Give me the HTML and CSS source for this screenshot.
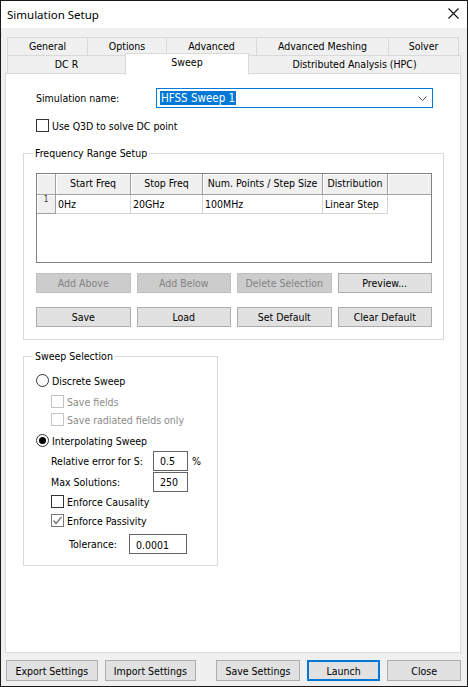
FILE: index.html
```html
<!DOCTYPE html>
<html lang="en">
<head>
<meta charset="UTF-8" />
<title>Simulation Setup</title>
<link rel="stylesheet" href="styles.css">
</head>
<body>
<div class="window">
  <div class="titlebar">
    <span class="title">Simulation Setup</span>
    <svg class="close" width="11" height="11" viewBox="0 0 11 11"><path d="M0.5 0.5 L10.5 10.5 M10.5 0.5 L0.5 10.5" stroke="#111" stroke-width="1.1" fill="none"/></svg>
  </div>

  <div class="client">
    <div class="tabs">
      <div class="tab-row">
        <div class="tab w-general">General</div>
        <div class="tab w-options">Options</div>
        <div class="tab w-advanced">Advanced</div>
        <div class="tab w-meshing">Advanced Meshing</div>
        <div class="tab w-solver">Solver</div>
      </div>
      <div class="tab-row second">
        <div class="tab w-dcr">DC R</div>
        <div class="tab w-sweep active">Sweep</div>
        <div class="tab w-hpc">Distributed Analysis (HPC)</div>
      </div>
    </div>

    <div class="panel">
      <div class="name-row">
        <label class="name-label">Simulation name:</label>
        <div class="combo">
          <span class="combo-text">HFSS Sweep 1</span>
          <svg class="chevron" width="9" height="5" viewBox="0 0 9 5"><path d="M0.5 0.5 L4.5 4.5 L8.5 0.5" stroke="#555" fill="none"/></svg>
        </div>
      </div>

      <div class="check-row q3d">
        <span class="checkbox"></span>
        <span>Use Q3D to solve DC point</span>
      </div>

      <fieldset class="group freq">
        <legend>Frequency Range Setup</legend>
        <div class="grid">
          <div class="grid-row head">
            <div class="cell corner"></div>
            <div class="cell c-start">Start Freq</div>
            <div class="cell c-stop">Stop Freq</div>
            <div class="cell c-num">Num. Points / Step Size</div>
            <div class="cell c-dist">Distribution</div>
            <div class="cell c-rest"></div>
          </div>
          <div class="grid-row data">
            <div class="cell corner">1</div>
            <div class="cell c-start">0Hz</div>
            <div class="cell c-stop">20GHz</div>
            <div class="cell c-num">100MHz</div>
            <div class="cell c-dist">Linear Step</div>
          </div>
        </div>
        <div class="btn-grid first">
          <button class="btn" disabled>Add Above</button>
          <button class="btn" disabled>Add Below</button>
          <button class="btn" disabled>Delete Selection</button>
          <button class="btn">Preview...</button>
        </div>
        <div class="btn-grid second">
          <button class="btn">Save</button>
          <button class="btn">Load</button>
          <button class="btn">Set Default</button>
          <button class="btn">Clear Default</button>
        </div>
      </fieldset>

      <fieldset class="group sweep">
        <legend>Sweep Selection</legend>
        <div class="check-row r-discrete">
          <span class="radio"></span>
          <span>Discrete Sweep</span>
        </div>
        <div class="check-row sub disabled r-fields">
          <span class="checkbox"></span>
          <span>Save fields</span>
        </div>
        <div class="check-row sub disabled r-radiated">
          <span class="checkbox"></span>
          <span>Save radiated fields only</span>
        </div>
        <div class="check-row r-interp">
          <span class="radio on"></span>
          <span>Interpolating Sweep</span>
        </div>
        <div class="field-row r-rel">
          <span class="field-label">Relative error for S:</span>
          <span class="input small">0.5</span>
          <span class="unit">%</span>
        </div>
        <div class="field-row r-max">
          <span class="field-label">Max Solutions:</span>
          <span class="input small">250</span>
        </div>
        <div class="check-row sub r-caus">
          <span class="checkbox"></span>
          <span>Enforce Causality</span>
        </div>
        <div class="check-row sub r-pass">
          <span class="checkbox checked">
            <svg width="11" height="11" viewBox="0 0 11 11"><path d="M1.5 5.5 L4 8.5 L9.5 2" stroke="#6d6d6d" stroke-width="1.2" fill="none"/></svg>
          </span>
          <span>Enforce Passivity</span>
        </div>
        <div class="field-row r-tol">
          <span class="field-label tol">Tolerance:</span>
          <span class="input wide">0.0001</span>
        </div>
      </fieldset>
    </div>

    <div class="footer">
      <button class="btn foot b-export">Export Settings</button>
      <button class="btn foot b-import">Import Settings</button>
      <button class="btn foot b-save">Save Settings</button>
      <button class="btn foot b-launch default">Launch</button>
      <button class="btn foot b-close">Close</button>
    </div>
  </div>
</div>
</body>
</html>
```

FILE: styles.css
```css
:root {
  --face: #f0f0f0;
  --line: #d9d9d9;
  --btn: #e1e1e1;
  --btn-border: #adadad;
  --accent: #0078d7;
  --ui-font: "DejaVu Sans Condensed", "DejaVu Sans", sans-serif;
}

* {
  box-sizing: border-box;
}

html, body {
  margin: 0;
  background: #fff;
}

.window {
  width: 468px;
  height: 687px;
  border: 1px solid #1a1a1a;
  background: var(--face);
  display: flex;
  flex-direction: column;
  font-family: var(--ui-font);
  font-size: 10.5px;
  color: #000;
}

/* Title bar */
.titlebar {
  height: 27px;
  background: #fff;
  display: flex;
  align-items: center;
  justify-content: space-between;
  padding: 0 8px 1px 6px;
}
.titlebar .title {
  font-family: "Noto Sans", sans-serif;
  font-size: 11.5px;
}
.titlebar .close {
  display: block;
  margin-top: -1px;
}

.client {
  flex: 1;
  display: flex;
  flex-direction: column;
  padding: 9px 6px 5px 4px;
}

/* Tabs */
.tabs {
  padding-left: 2px;
}
.tab-row {
  display: flex;
  align-items: flex-start;
  height: 19px;
}
.tab-row.second {
  margin-top: -1px;
}
.tab {
  height: 19px;
  border: 1px solid var(--line);
  background: var(--face);
  margin-left: -1px;
  text-align: center;
  line-height: 17px;
}
.tab:first-child {
  margin-left: 0;
}
.tab.active {
  position: relative;
  z-index: 1;
  background: #fff;
  margin-top: -2px;
  height: 22px;
  border-bottom: none;
  line-height: 17px;
}
.w-general { width: 81px; }
.w-options { width: 80px; }
.w-advanced { width: 91px; }
.w-meshing { width: 133px; }
.w-solver { width: 71px; }
.w-dcr { width: 119px; }
.w-sweep { width: 124px; }
.w-hpc { width: 213px; }

/* Page panel */
.panel {
  margin-top: -1px;
  height: 580px;
  border: 1px solid var(--line);
  background: #fff;
  padding-top: 14px;
}

.name-row {
  display: flex;
  align-items: center;
  height: 20px;
}
.name-label {
  width: 150px;
  padding-left: 30px;
}
.combo {
  width: 277px;
  height: 20px;
  border: 1px solid var(--accent);
  display: flex;
  align-items: center;
  justify-content: space-between;
  padding: 0 5px 0 3px;
}
.combo-text {
  background: var(--accent);
  color: #fff;
  font-size: 11.5px;
  line-height: 14px;
  padding: 0 1px;
}
.chevron {
  display: block;
}

/* Check boxes and radios */
.check-row {
  display: flex;
  align-items: center;
  height: 13px;
  gap: 3px;
}
.checkbox {
  width: 13px;
  height: 13px;
  border: 1px solid #333;
  background: #fff;
  display: flex;
  align-items: center;
  justify-content: center;
}
.checkbox.checked {
  border-color: #7a7a7a;
}
.radio {
  width: 13px;
  height: 13px;
  border: 1px solid #333;
  border-radius: 50%;
  background: #fff;
  display: flex;
  align-items: center;
  justify-content: center;
}
.radio.on::after {
  content: "";
  width: 7px;
  height: 7px;
  border-radius: 50%;
  background: #000;
}
.disabled {
  color: #8b8b8b;
}
.disabled .checkbox {
  border-color: #c4c4c4;
}
.q3d {
  margin: 11px 0 0 30px;
}

/* Group boxes */
.group {
  margin: 0 0 0 17px;
  border: 1px solid var(--line);
  padding: 0 0 0 12px;
  min-width: 0;
}
.group legend {
  padding: 0 2px;
  margin-left: -3px;
  line-height: 13px;
}
.freq {
  width: 421px;
  margin-top: 15px;
  padding-bottom: 12px;
}
.sweep {
  width: 195px;
  margin-top: 10px;
  padding-bottom: 11px;
}

/* Frequency table */
.grid {
  width: 396px;
  height: 90px;
  margin-top: 13px;
  border: 1px solid #828282;
  background: #fff;
}
.grid-row {
  display: flex;
}
.grid-row.head {
  height: 21px;
  background: var(--face);
}
.grid-row.data {
  height: 19px;
}
.cell {
  border-right: 1px solid #d4d4d4;
  border-bottom: 1px solid #d4d4d4;
  line-height: 18px;
  padding-left: 2px;
  white-space: nowrap;
}
.head .cell {
  border-right: 1px solid #a0a0a0;
  border-bottom: 1px solid #a0a0a0;
  box-shadow: inset 1px 1px #fff;
  text-align: center;
  line-height: 19px;
  padding: 0;
}
.head .c-rest {
  border-right: none;
}
.corner {
  width: 19px;
  padding: 0;
  background: var(--face);
  border-right: 1px solid #a0a0a0;
  border-bottom: 1px solid #a0a0a0;
  box-shadow: inset 1px 1px #fff;
}
.data .corner {
  font-size: 8px;
  line-height: 10px;
  text-align: center;
  color: #333;
}
.c-start { width: 75px; }
.c-stop { width: 72px; }
.c-num { width: 120px; }
.c-dist { width: 65px; }
.c-rest { flex: 1; }

/* Buttons */
.btn {
  font-family: var(--ui-font);
  font-size: 10.5px;
  color: #000;
  background: var(--btn);
  border: 1px solid var(--btn-border);
  border-radius: 0;
  padding: 0;
  margin: 0;
  height: 20px;
}
.btn:disabled {
  background: #cccccc;
  border-color: #bfbfbf;
  color: #838383;
}
.btn-grid {
  width: 396px;
  display: grid;
  grid-template-columns: repeat(4, 1fr);
  column-gap: 6px;
}
.btn-grid.first {
  margin-top: 10px;
}
.btn-grid.second {
  margin-top: 14px;
}

/* Sweep selection rows */
.field-row {
  display: flex;
  align-items: center;
  height: 20px;
  padding-left: 15px;
}
.field-label {
  width: 102px;
}
.field-label.tol {
  width: 78px;
  padding-left: 18px;
}
.input {
  height: 20px;
  border: 1px solid #646464;
  background: #fff;
  line-height: 18px;
  padding-left: 6px;
}
.input.small { width: 35px; }
.input.wide {
  width: 58px;
  line-height: 20px;
}
.unit {
  margin-left: 4px;
}
.sub {
  padding-left: 15px;
}
.r-discrete { margin-top: 11px; }
.r-fields { margin-top: 8px; }
.r-radiated { margin-top: 5px; }
.r-interp { margin-top: 8px; }
.r-rel { margin-top: 4px; }
.r-max { margin-top: 1px; }
.r-caus { margin-top: 3px; }
.r-pass { margin-top: 6px; }
.r-tol { margin-top: 7px; }

/* Bottom button bar */
.footer {
  display: flex;
  margin-top: 7px;
  padding-left: 1px;
}
.btn.foot {
  height: 21px;
}
.b-export { width: 92px; }
.b-import { width: 92px; margin-left: 7px; }
.b-save { width: 84px; margin-left: 20px; }
.b-launch { width: 74px; margin-left: 7px; }
.b-close { width: 74px; margin-left: 7px; }
.btn.default {
  border: 2px solid var(--accent);
}
```
